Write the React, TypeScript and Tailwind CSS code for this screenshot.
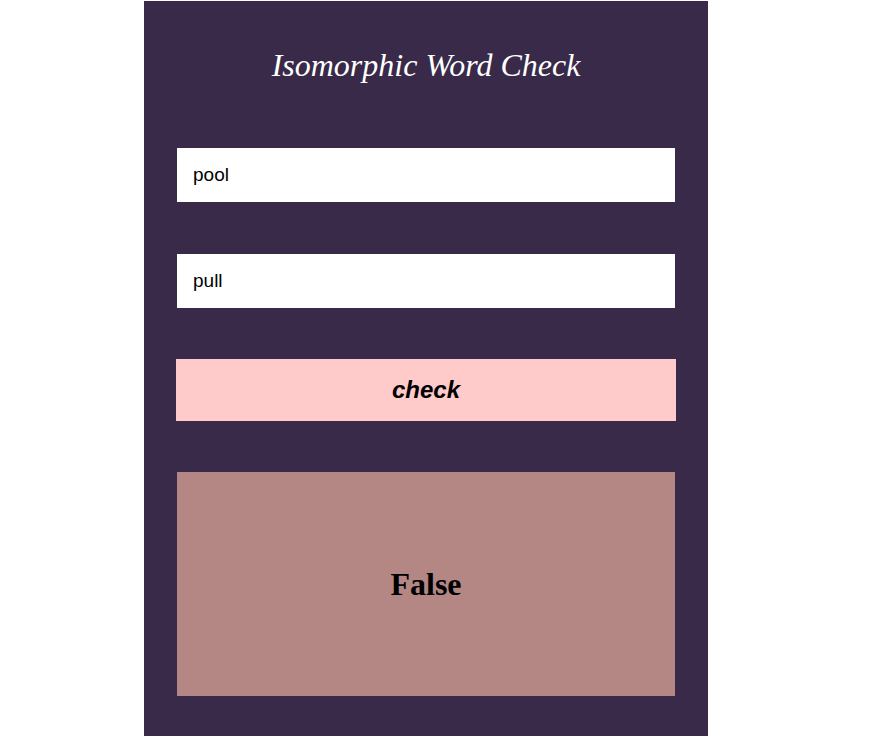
import { useState } from "react";

const isIsomorphic = (a: string, b: string): boolean => {
  if (a.length !== b.length) return false;
  const ab = new Map<string, string>();
  const ba = new Map<string, string>();
  for (let i = 0; i < a.length; i++) {
    const x = a[i];
    const y = b[i];
    if ((ab.has(x) && ab.get(x) !== y) || (ba.has(y) && ba.get(y) !== x)) return false;
    ab.set(x, y);
    ba.set(y, x);
  }
  return true;
};

export default function App() {
  const [first, setFirst] = useState("pool");
  const [second, setSecond] = useState("pull");
  const [result, setResult] = useState<boolean>(isIsomorphic("pool", "pull"));

  return (
    <div className="min-h-[736px] bg-white pt-px">
      <div className="ml-[144px] flex min-h-[735px] w-[564px] flex-col items-center bg-[#382a48] px-[33px]">
        <h1 className="mt-[42px] font-['Liberation_Serif',serif] text-[32px] leading-[44px] italic text-white">
          Isomorphic Word Check
        </h1>

        <input
          value={first}
          onChange={(e) => setFirst(e.target.value)}
          className="mt-[61px] h-[54px] w-[498px] bg-white px-4 font-['Liberation_Sans',sans-serif] text-[19px] text-black outline-none"
        />

        <input
          value={second}
          onChange={(e) => setSecond(e.target.value)}
          className="mt-[52px] h-[54px] w-[498px] bg-white px-4 font-['Liberation_Sans',sans-serif] text-[19px] text-black outline-none"
        />

        <button
          type="button"
          onClick={() => setResult(isIsomorphic(first, second))}
          className="mt-[51px] h-[62px] w-[500px] bg-[#ffcaca] font-['Liberation_Sans',sans-serif] text-[24px] font-bold italic text-black"
        >
          check
        </button>

        <div className="mt-[51px] flex h-[224px] w-[498px] items-center justify-center bg-[#b48784]">
          <span className="font-['Liberation_Serif',serif] text-[32px] font-bold text-black">
            {result ? "True" : "False"}
          </span>
        </div>
      </div>
    </div>
  );
}
